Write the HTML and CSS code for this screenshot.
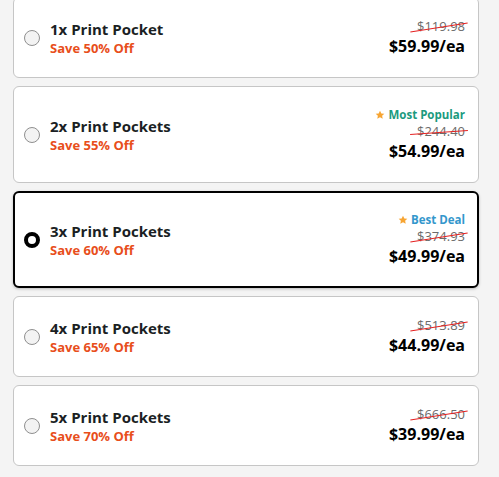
FILE: index.html
```html
<!DOCTYPE html>
<html lang="en">
<head>
<meta charset="utf-8">
<title>Print Pockets</title>
<link rel="stylesheet" href="styles.css">
</head>
<body>
<div class="list">
  <label class="card">
    <span class="radio"></span>
    <div class="info">
      <div class="title">1x Print Pocket</div>
      <div class="save">Save 50% Off</div>
    </div>
    <div class="price">
      <div class="old"><span class="strike">$119.98</span></div>
      <div class="new">$59.99/ea</div>
    </div>
  </label>
  <label class="card">
    <span class="radio"></span>
    <div class="info">
      <div class="title">2x Print Pockets</div>
      <div class="save">Save 55% Off</div>
    </div>
    <div class="price">
      <div class="badge badge-popular"><svg class="star" viewBox="0 0 24 24"><path d="M12 1.5l3.2 6.6 7.2.9-5.3 5 1.4 7.2L12 17.6l-6.5 3.6 1.4-7.2-5.3-5 7.2-.9z"/></svg>Most Popular</div>
      <div class="old"><span class="strike strike-flat">$244.40</span></div>
      <div class="new">$54.99/ea</div>
    </div>
  </label>
  <label class="card card-selected">
    <span class="radio radio-on"></span>
    <div class="info">
      <div class="title">3x Print Pockets</div>
      <div class="save">Save 60% Off</div>
    </div>
    <div class="price">
      <div class="badge badge-deal"><svg class="star" viewBox="0 0 24 24"><path d="M12 1.5l3.2 6.6 7.2.9-5.3 5 1.4 7.2L12 17.6l-6.5 3.6 1.4-7.2-5.3-5 7.2-.9z"/></svg>Best Deal</div>
      <div class="old"><span class="strike">$374.93</span></div>
      <div class="new">$49.99/ea</div>
    </div>
  </label>
  <label class="card">
    <span class="radio"></span>
    <div class="info">
      <div class="title">4x Print Pockets</div>
      <div class="save">Save 65% Off</div>
    </div>
    <div class="price">
      <div class="old"><span class="strike">$513.89</span></div>
      <div class="new">$44.99/ea</div>
    </div>
  </label>
  <label class="card">
    <span class="radio"></span>
    <div class="info">
      <div class="title">5x Print Pockets</div>
      <div class="save">Save 70% Off</div>
    </div>
    <div class="price">
      <div class="old"><span class="strike">$666.50</span></div>
      <div class="new">$39.99/ea</div>
    </div>
  </label>
</div>
</body>
</html>
```
FILE: styles.css
```css
* { box-sizing: border-box; }
html, body {
  margin: 0;
  padding: 0;
  background: #f4f4f4;
}
body {
  font-family: "Open Sans", "Noto Sans", sans-serif;
  color: #1b1f24;
}
.list {
  display: flex;
  flex-direction: column;
  gap: 8px;
  width: 466px;
  margin: -3px 0 0 13px;
}
.card {
  display: flex;
  align-items: center;
  gap: 10px;
  padding: 20px 13px 20px 10px;
  background: #fff;
  border: 1px solid #c6c6c6;
  border-radius: 6px;
  cursor: pointer;
}
.card-selected {
  border: 2px solid #000;
  padding: 19px 12px 19px 9px;
  box-shadow: 0 1px 3px rgba(0, 0, 0, 0.25);
}
.radio {
  flex: none;
  width: 16px;
  height: 16px;
  border: 1px solid #8f8f8f;
  border-radius: 50%;
  background: #f3f3f3;
}
.radio-on {
  border: 4px solid #000;
  background: #fff;
}
.info {
  flex: 1;
  display: flex;
  flex-direction: column;
}
.title {
  font-size: 15px;
  font-weight: 700;
  line-height: 22px;
}
.save {
  font-size: 13px;
  font-weight: 700;
  line-height: 17px;
  color: #e84e1b;
}
.price {
  display: flex;
  flex-direction: column;
  align-items: flex-end;
}
.badge {
  display: flex;
  align-items: center;
  gap: 3px;
  font-size: 11.5px;
  font-weight: 700;
  line-height: 16px;
}
.badge-popular { color: #1b9a7e; }
.badge-deal { color: #3497cc; }
.star {
  width: 10px;
  height: 10px;
  fill: #f7a533;
}
.old {
  font-size: 13px;
  line-height: 17px;
  color: #6b6b6b;
}
.strike {
  position: relative;
  display: inline-block;
}
.strike::after {
  content: "";
  position: absolute;
  left: -7px;
  right: -3px;
  top: 50%;
  height: 1px;
  background: #e52222;
  transform: rotate(-9deg);
}
.strike-flat::after {
  transform: rotate(-4deg);
}
.new {
  font-size: 16px;
  font-weight: 700;
  line-height: 22px;
  color: #000;
}
```
